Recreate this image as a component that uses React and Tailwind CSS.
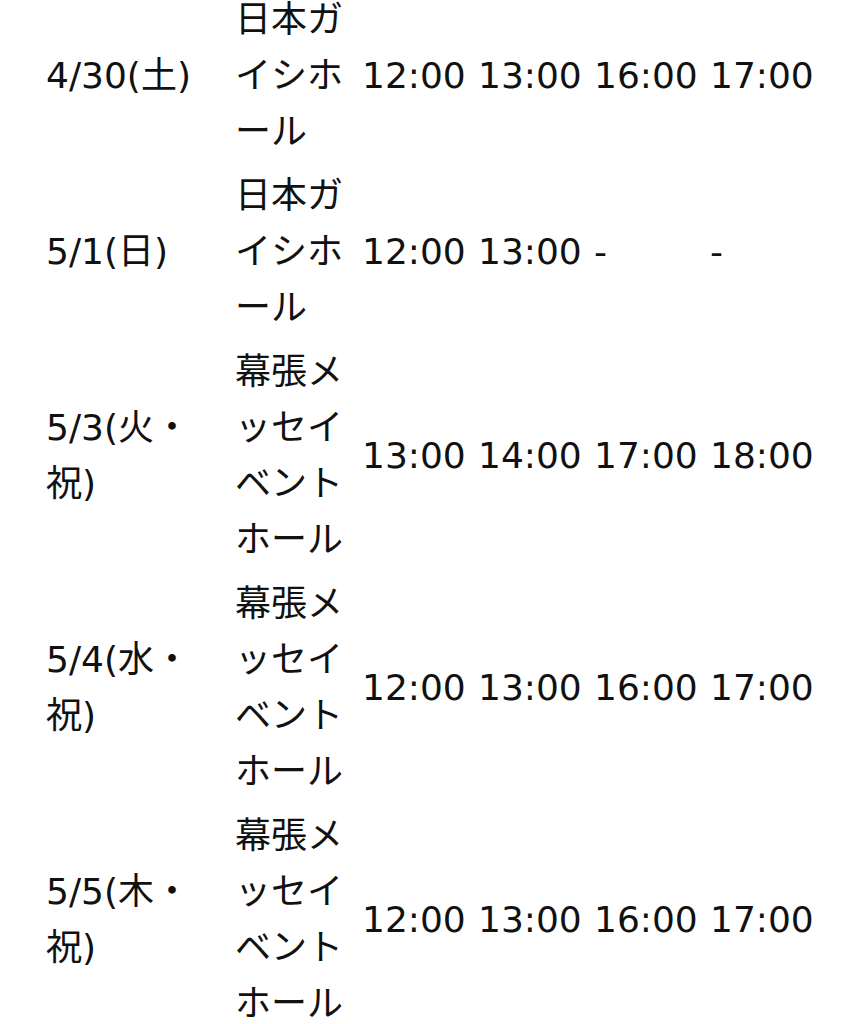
import React from "react";

const rows = [
  { date: "4/30(土)", venue: "日本ガイシホール", times: ["12:00", "13:00", "16:00", "17:00"] },
  { date: "5/1(日)", venue: "日本ガイシホール", times: ["12:00", "13:00", "-", "-"] },
  { date: "5/3(火・祝)", venue: "幕張メッセイベントホール", times: ["13:00", "14:00", "17:00", "18:00"] },
  { date: "5/4(水・祝)", venue: "幕張メッセイベントホール", times: ["12:00", "13:00", "16:00", "17:00"] },
  { date: "5/5(木・祝)", venue: "幕張メッセイベントホール", times: ["12:00", "13:00", "16:00", "17:00"] },
];

const App = () => {
  return (
    <div
      className="min-h-screen bg-white text-[#111] overflow-hidden"
      style={{ fontFamily: '"DejaVu Sans", "Noto Sans CJK JP", sans-serif' }}
    >
      <div className="-mt-[12px] pl-[46px] grid grid-cols-[189px_127px_116px_116px_116px_116px] items-center text-[36px] leading-[56px]">
        {rows.map((row, i) => (
          <React.Fragment key={i}>
            <div className="py-[4px] pr-[30px]">{row.date}</div>
            <div className="py-[4px] pr-[8px]">{row.venue}</div>
            {row.times.map((t, j) => (
              <div key={j} className="py-[4px] whitespace-nowrap">
                {t}
              </div>
            ))}
          </React.Fragment>
        ))}
      </div>
    </div>
  );
};

export default App;
